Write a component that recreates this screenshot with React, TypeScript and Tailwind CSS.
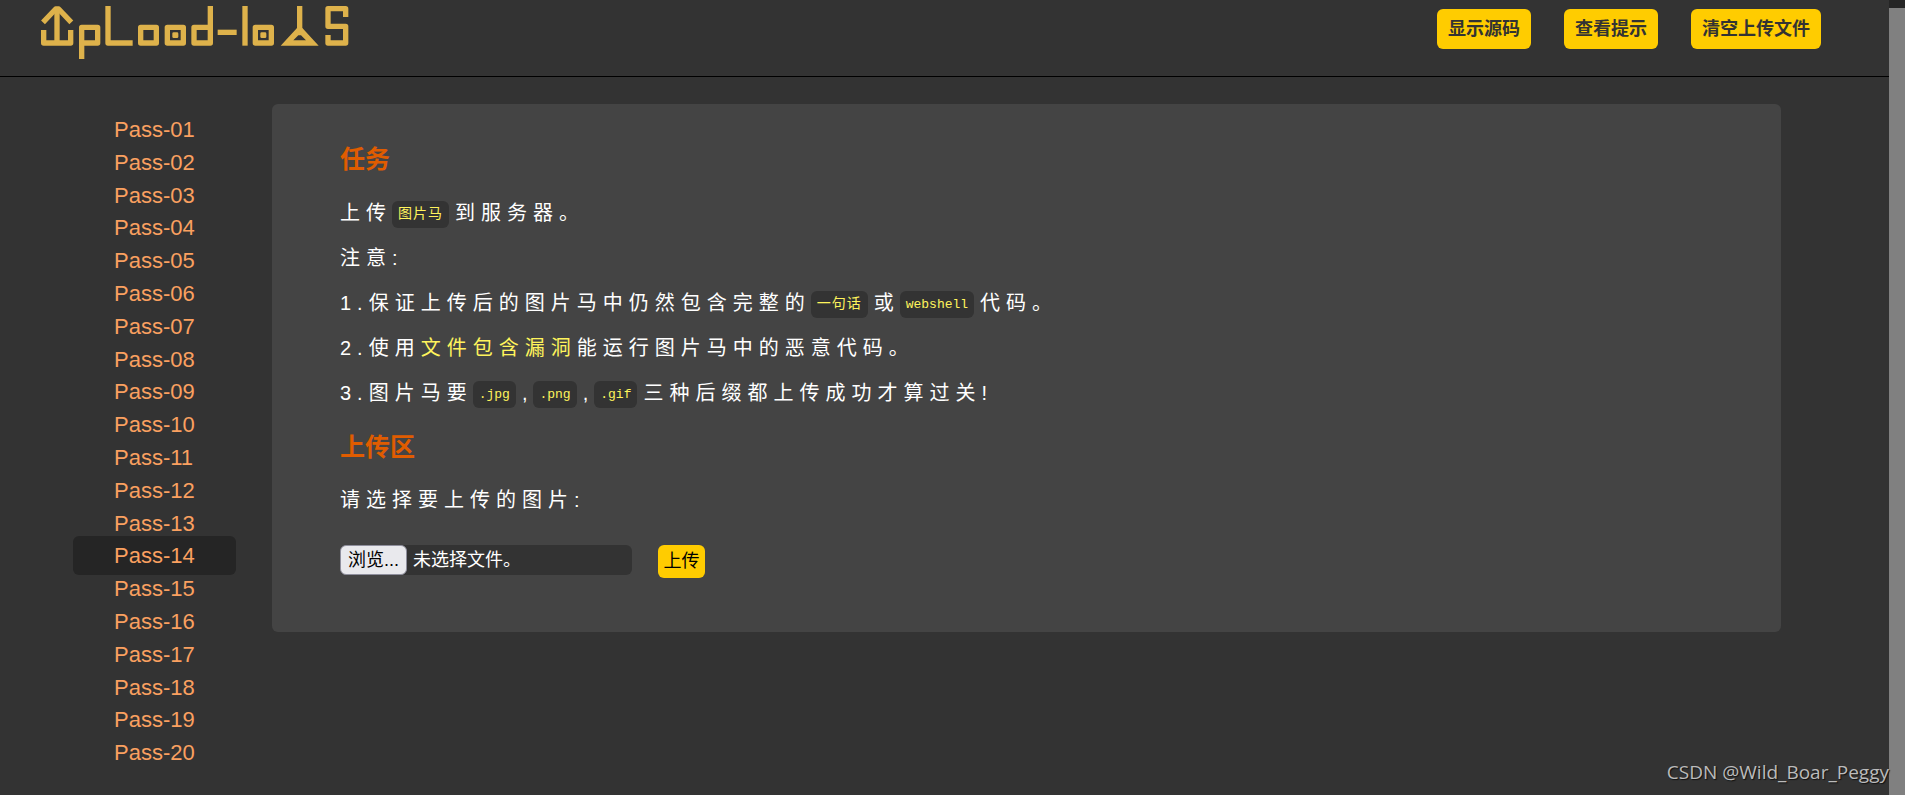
import type { ReactNode } from 'react'

const PASS_COUNT = 20
const ACTIVE_PASS = 14

const passes = Array.from({ length: PASS_COUNT }, (_, i) => i + 1)

const headerActions = ['显示源码', '查看提示', '清空上传文件']

function Logo() {
  return (
    <svg viewBox="60 15 930 165" className="h-[55px] w-[310px]" role="img" aria-label="upload-labs">
      <g fill="none" stroke="#deb24b" strokeWidth="16" strokeLinejoin="round" strokeLinecap="butt">
        <path d="M69 67 L107 27 H116 L154 67" />
        <path d="M111 26 V129" />
        <path d="M71 90 V129 H152 V90" />
        <path d="M185 177 V82 H233 V129 H185" />
        <path d="M264 18 V129 H338" />
        <rect x="362" y="82" width="47" height="47" />
        <rect x="442" y="82" width="48" height="47" />
        <path d="M571 18 V129 H522 V82 H571" />
        <path d="M593 97 H650" />
        <path d="M675 18 V137" />
        <rect x="706" y="82" width="48" height="47" />
        <path d="M839 18 V92" />
        <path d="M977 51 V26 H924 V79 H977 V129 H924 V105" />
      </g>
      <g fill="#deb24b">
        <rect x="457" y="97" width="18" height="17" rx="4" />
        <rect x="721" y="97" width="18" height="17" rx="4" />
        <path fillRule="evenodd" d="M831 84 H847 L896 137 H782 Z M835 106 L820 121 H858 L843 106 Z" />
      </g>
    </svg>
  )
}

function Code({ children, cjk = false }: { children: ReactNode; cjk?: boolean }) {
  return (
    <code
      className={`mr-[6px] inline-flex h-[27px] items-center rounded-md bg-[#333] px-[6px] align-middle font-['Liberation_Mono','Noto_Sans_CJK_SC',monospace] text-[#fff45c] ${cjk ? 'text-[14px] tracking-[1px]' : 'text-[13px] tracking-normal'}`}
    >
      {children}
    </code>
  )
}

function Line({ children }: { children: ReactNode }) {
  return <p className="text-[20px] leading-[45px] tracking-[6px] text-white">{children}</p>
}

function Heading({ children }: { children: ReactNode }) {
  return <h3 className="text-[25px] leading-[34px] font-bold text-[#e05c00]">{children}</h3>
}

export default function App() {
  return (
    <div className="flex min-h-screen bg-[#333] font-['Liberation_Sans','Noto_Sans_CJK_SC',sans-serif]">
      <div className="relative min-w-0 flex-1">
        <header className="flex h-[77px] items-start justify-between border-b border-black pr-[68px] pl-[40px]">
          <a href="#" className="mt-[5px]">
            <Logo />
          </a>
          <div className="mt-[9px] flex gap-[33px]">
            {headerActions.map((label) => (
              <button
                key={label}
                type="button"
                className="h-[40px] rounded-md bg-[#fc0] px-[11px] text-[18px] font-bold text-[#333]"
              >
                {label}
              </button>
            ))}
          </div>
        </header>

        <div className="flex items-start">
          <nav className="mt-[36px] w-[272px] shrink-0 pl-[73px]">
            <ul className="flex h-[656px] flex-col">
              {passes.map((n) => (
                <li key={n} className="min-h-0 flex-1 text-[22px] leading-[33px]">
                  <a
                    href={`#pass-${n}`}
                    className={`rounded-md px-[41px] py-[7px] text-[#faa060] ${n === ACTIVE_PASS ? 'bg-[#252525]' : ''}`}
                  >
                    Pass-{String(n).padStart(2, '0')}
                  </a>
                </li>
              ))}
            </ul>
          </nav>

          <main className="mt-[27px] mr-[108px] min-w-0 flex-1 rounded-md bg-[#444] px-[68px] pt-[38px] pb-[54px]">
            <Heading>任务</Heading>
            <div className="mt-[15px] mb-[14px]">
              <Line>
                上传<Code cjk>图片马</Code>到服务器。
              </Line>
              <Line>注意:</Line>
              <Line>
                1.保证上传后的图片马中仍然包含完整的<Code cjk>一句话</Code>或<Code>webshell</Code>代码。
              </Line>
              <Line>
                2.使用<a href="#include" className="text-[#fff45c]">文件包含漏洞</a>能运行图片马中的恶意代码。
              </Line>
              <Line>
                3.图片马要<Code>.jpg</Code>,<Code>.png</Code>,<Code>.gif</Code>三种后缀都上传成功才算过关!
              </Line>
            </div>
            <Heading>上传区</Heading>
            <form className="mt-[14px]" onSubmit={(e) => e.preventDefault()}>
              <Line>请选择要上传的图片:</Line>
              <div className="mt-[22px] flex items-start gap-[26px] text-[18px]">
                <label className="flex h-[30px] w-[292px] cursor-pointer items-center gap-[6px] rounded-md bg-[#333] text-white">
                  <input type="file" name="upload_file" className="sr-only" />
                  <span className="flex h-[30px] items-center rounded-md border border-[#8f8f9d] bg-[#e9e9ed] px-[7px] text-black">
                    浏览...
                  </span>
                  未选择文件。
                </label>
                <button type="submit" className="h-[33px] w-[47px] rounded-md bg-[#fc0] text-black">
                  上传
                </button>
              </div>
            </form>
          </main>
        </div>

        <span className="absolute right-0 bottom-[9px] font-['Open_Sans',sans-serif] text-[19px] leading-[28px] text-[#bbb] [text-shadow:1px_1px_1px_#111]">
          CSDN @Wild_Boar_Peggy
        </span>
      </div>

      {/* scrollbar */}
      <div className="flex w-[16px] shrink-0 flex-col bg-[#252525] pt-[8px]">
        <div className="flex-1 bg-[#808080]" />
      </div>
    </div>
  )
}
